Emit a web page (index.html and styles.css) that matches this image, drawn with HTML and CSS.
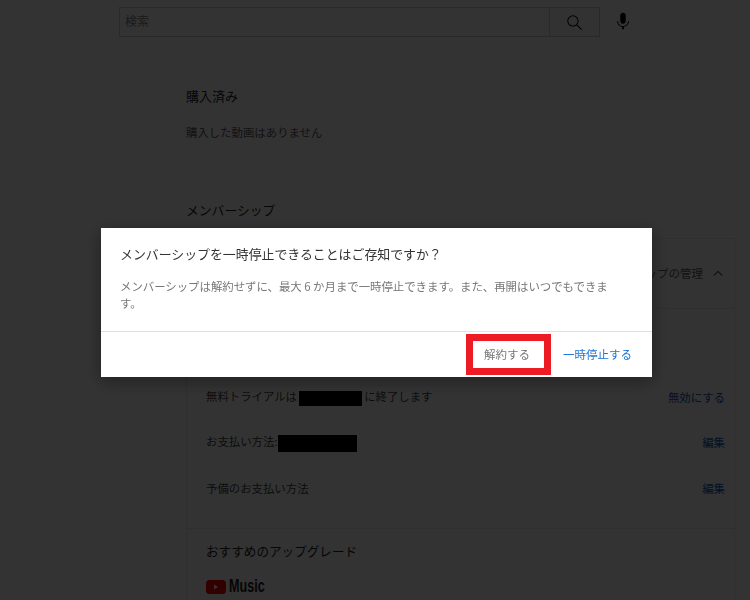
FILE: index.html
```html
<!DOCTYPE html>
<html lang="ja">
<head>
<meta charset="utf-8">
<title>メンバーシップ</title>
<link rel="stylesheet" href="styles.css">
</head>
<body>
<header class="topbar">
  <div class="search">
    <div class="search-input">検索</div>
    <div class="search-btn">
      <svg class="icon" viewBox="0 0 24 24"><circle cx="10" cy="10" r="6.5"/><path d="M15 15l6 6"/></svg>
    </div>
  </div>
  <div class="mic">
    <svg viewBox="0 0 24 24"><path d="M12 3C10.340 3 9 4.370 9 6.070V11.930C9 13.630 10.340 15 12 15C13.660 15 15 13.630 15 11.930V6.070C15 4.370 13.660 3 12 3ZM18.500 12H17.500C17.500 15.030 15.030 17.500 12 17.500C8.970 17.500 6.500 15.030 6.500 12H5.500C5.500 15.240 7.890 17.930 11 18.410V21H13V18.410C16.110 17.930 18.500 15.240 18.500 12Z"/></svg>
  </div>
</header>
<main class="main">
  <h2 class="section-title">購入済み</h2>
  <p class="empty">購入した動画はありません</p>
  <h2 class="section-title members">メンバーシップ</h2>
  <section class="card">
    <div class="card-head">
      <span>メンバーシップの管理</span>
      <svg class="chev" viewBox="0 0 16 16"><path d="M3 11l5-5 5 5"/></svg>
    </div>
    <div class="rows">
      <div class="row"><span>無料トライアルは <i class="mask mask-date"></i> に終了します</span><a class="link">無効にする</a></div>
      <div class="row"><span>お支払い方法:<i class="mask mask-card"></i></span><a class="link">編集</a></div>
      <div class="row"><span>予備のお支払い方法</span><a class="link">編集</a></div>
    </div>
  </section>
  <section class="card upgrade">
    <h3 class="upgrade-title">おすすめのアップグレード</h3>
    <div class="logo">
      <svg viewBox="0 0 20 14"><rect width="20" height="14" rx="3.500" fill="#f00"/><path d="M8 4.500v5l4-2.500z" fill="#fff"/></svg>
      <span>Music</span>
    </div>
  </section>
</main>
<div class="overlay">
  <div class="dialog">
    <div class="dialog-body">
      <h2 class="dialog-title">メンバーシップを一時停止できることはご存知ですか？</h2>
      <p class="dialog-text">メンバーシップは解約せずに、最大 6 か月まで一時停止できます。また、再開はいつでもできます。</p>
    </div>
    <div class="dialog-foot">
      <button class="btn btn-cancel">解約する</button>
      <button class="btn btn-pause">一時停止する</button>
    </div>
  </div>
</div>
</body>
</html>
```
FILE: styles.css
```css
* { box-sizing: border-box; }
html, body { height: 100%; }
body {
  margin: 0;
  height: 600px;
  overflow: hidden;
  background: #fff;
  color: #222;
  font-family: "Noto Sans CJK JP", "Liberation Sans", sans-serif;
  font-size: 12px;
}
.topbar {
  display: flex;
  align-items: flex-start;
  height: 44px;
  padding: 7px 0 0 119px;
}
.search {
  display: flex;
  width: 481px;
  height: 30px;
  border: 1px solid #ccc;
}
.search-input {
  flex: 1;
  padding-left: 5px;
  line-height: 26px;
  color: #888;
  font-size: 12px;
}
.search-btn {
  width: 50px;
  display: flex;
  align-items: center;
  justify-content: center;
  background: #f8f8f8;
  border-left: 1px solid #d3d3d3;
}
.icon { width: 19px; height: 19px; fill: none; stroke: #0a0a0a; stroke-width: 1.300; }
.mic { width: 22px; height: 22px; margin: 3px 0 0 12px; }
.mic svg { width: 22px; height: 22px; display: block; fill: #030303; }
.main { width: 549px; margin-left: 186px; }
.section-title {
  margin: 0;
  padding-top: 42px;
  font-size: 13px;
  line-height: 20px;
  font-weight: 400;
}
.empty {
  margin: 17px 0 0;
  font-size: 11.400px;
  line-height: 18px;
  color: #606060;
}
.section-title.members { padding-top: 59px; font-size: 12.800px; }
.card { border: 1px solid #ececec; border-bottom: 0; }
.section-title.members + .card { margin-top: 18px; }
.card-head {
  display: flex;
  justify-content: flex-end;
  align-items: center;
  gap: 8px;
  height: 70px;
  padding: 0 9px 2px 0;
  border-bottom: 1px solid #ececec;
  font-size: 11.500px;
  color: #606060;
}
.chev { width: 14px; height: 14px; fill: none; stroke: #555; stroke-width: 1.300; }
.rows { padding: 65px 9px 17px 19px; }
.row {
  display: flex;
  justify-content: space-between;
  align-items: center;
  height: 45.600px;
  font-size: 11.400px;
  color: #444;
}
.link { color: #0a58c0; }
.mask { display: inline-block; vertical-align: middle; background: #000; }
.mask-date { width: 63px; height: 15px; margin-left: -1px; }
.mask-card { width: 79px; height: 17px; }
.card.upgrade { height: 80px; padding: 12px 19px 0; }
.upgrade-title {
  margin: 0;
  font-size: 12.600px;
  line-height: 20px;
  font-weight: 400;
}
.logo {
  display: flex;
  align-items: center;
  gap: 3px;
  margin-top: 18px;
  height: 16px;
}
.logo svg { width: 20px; height: 14px; }
.logo span {
  font-family: "Liberation Sans", sans-serif;
  font-weight: 700;
  font-size: 18px;
  transform: scaleX(.7);
  transform-origin: left center;
}
.overlay {
  position: fixed;
  inset: 0;
  padding: 228px 0 0 101px;
  background: rgba(0, 0, 0, .8);
}
.dialog {
  width: 551px;
  height: 149px;
  background: #fff;
  box-shadow: 0 4px 16px rgba(0, 0, 0, .4);
  display: flex;
  flex-direction: column;
}
.dialog-body { flex: 1; padding: 16px 36px 0 19px; }
.dialog-title {
  margin: 0;
  font-size: 12.900px;
  line-height: 20px;
  font-weight: 400;
  color: #333;
}
.dialog-text {
  margin: 14px 0 0;
  font-size: 11.400px;
  line-height: 17px;
  color: #777;
}
.dialog-foot {
  display: flex;
  justify-content: flex-end;
  align-items: center;
  gap: 12px;
  height: 46px;
  padding: 0 20px 0 0;
  border-top: 1px solid #e0e0e0;
}
.btn {
  padding: 0 0 2px;
  border: 0;
  background: #fff;
  font: inherit;
  font-size: 11.500px;
}
.btn-cancel {
  width: 85px;
  height: 41px;
  padding-right: 3px;
  border: 7px solid #ed1c24;
  color: #777;
}
.btn-pause { color: #1a73d8; }
```
